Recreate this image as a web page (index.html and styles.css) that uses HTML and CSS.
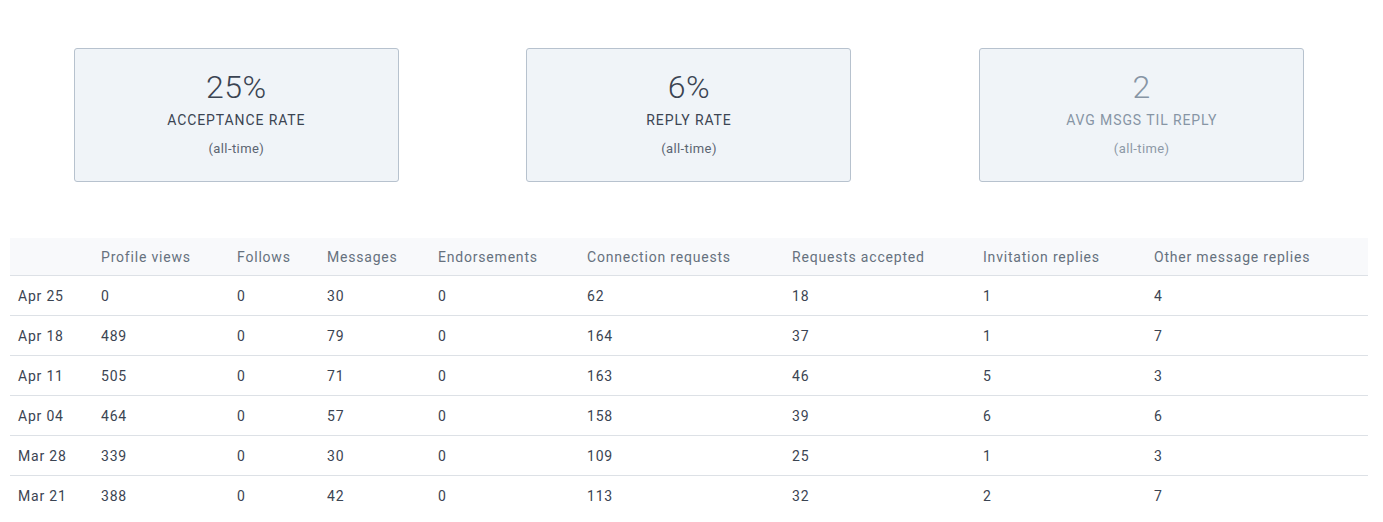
FILE: index.html
```html
<!DOCTYPE html>
<html lang="en">
<head>
  <meta charset="UTF-8" />
  <title>Outreach Stats</title>
  <meta name="viewport" content="width=device-width, initial-scale=1" />
  <link rel="stylesheet" href="styles.css">
</head>
<body>
  <div class="container">
    <div class="stats">
      <div class="stat-col">
        <div class="stat-card">
          <div class="stat-value">25%</div>
          <div class="stat-label">Acceptance rate</div>
          <div class="stat-note">(all-time)</div>
        </div>
      </div>
      <div class="stat-col">
        <div class="stat-card">
          <div class="stat-value">6%</div>
          <div class="stat-label">Reply rate</div>
          <div class="stat-note">(all-time)</div>
        </div>
      </div>
      <div class="stat-col">
        <div class="stat-card muted">
          <div class="stat-value">2</div>
          <div class="stat-label">Avg msgs til reply</div>
          <div class="stat-note">(all-time)</div>
        </div>
      </div>
    </div>

    <table class="weekly">
      <colgroup>
        <col style="width: 83px">
        <col style="width: 136px">
        <col style="width: 90px">
        <col style="width: 111px">
        <col style="width: 149px">
        <col style="width: 205px">
        <col style="width: 191px">
        <col style="width: 171px">
        <col>
      </colgroup>
      <thead>
        <tr>
          <th></th>
          <th>Profile views</th>
          <th>Follows</th>
          <th>Messages</th>
          <th>Endorsements</th>
          <th>Connection requests</th>
          <th>Requests accepted</th>
          <th>Invitation replies</th>
          <th>Other message replies</th>
        </tr>
      </thead>
      <tbody>
        <tr><td>Apr 25</td><td>0</td><td>0</td><td>30</td><td>0</td><td>62</td><td>18</td><td>1</td><td>4</td></tr>
        <tr><td>Apr 18</td><td>489</td><td>0</td><td>79</td><td>0</td><td>164</td><td>37</td><td>1</td><td>7</td></tr>
        <tr><td>Apr 11</td><td>505</td><td>0</td><td>71</td><td>0</td><td>163</td><td>46</td><td>5</td><td>3</td></tr>
        <tr><td>Apr 04</td><td>464</td><td>0</td><td>57</td><td>0</td><td>158</td><td>39</td><td>6</td><td>6</td></tr>
        <tr><td>Mar 28</td><td>339</td><td>0</td><td>30</td><td>0</td><td>109</td><td>25</td><td>1</td><td>3</td></tr>
        <tr><td>Mar 21</td><td>388</td><td>0</td><td>42</td><td>0</td><td>113</td><td>32</td><td>2</td><td>7</td></tr>
      </tbody>
    </table>
  </div>
</body>
</html>
```

FILE: styles.css
```css
body {
  font-family: Roboto, "Liberation Sans", Arial, sans-serif;
  background: #fff;
  color: #3b4452;
  margin: 0;
}
.container {
  padding: 48px 15px 0 10px;
}
.stats {
  display: grid;
  grid-template-columns: 1fr 1fr 1fr;
}
.stat-col {
  display: flex;
  justify-content: center;
}
.stat-card {
  width: 325px;
  height: 134px;
  box-sizing: border-box;
  background: #f0f4f8;
  border: 1px solid #b7c2ce;
  border-radius: 3px;
  display: flex;
  flex-direction: column;
  align-items: center;
  padding-top: 20px;
}
.stat-card.muted {
  color: #8795a5;
}
.stat-value {
  font-size: 32px;
  font-weight: 300;
  line-height: 36px;
  letter-spacing: 0.5px;
}
.stat-label {
  margin-top: 5px;
  font-size: 14px;
  line-height: 20px;
  text-transform: uppercase;
  letter-spacing: 0.9px;
}
.stat-card .stat-note {
  margin-top: 11px;
  font-size: 13px;
  line-height: 16px;
  letter-spacing: 0.4px;
  color: #5b6472;
}
.stat-card.muted .stat-note {
  color: #8d99a7;
}
.weekly {
  width: 100%;
  margin-top: 56px;
  border-collapse: collapse;
  table-layout: fixed;
  font-size: 14px;
  letter-spacing: 0.8px;
}
.weekly th {
  background: #f8f9fb;
  color: #66717e;
  font-weight: 400;
  text-align: left;
  height: 37px;
  padding: 0 8px;
  border-bottom: 1px solid #dde1e6;
}
.weekly td {
  height: 39px;
  padding: 0 8px;
  border-bottom: 1px solid #dde1e6;
  color: #3b4452;
}
.weekly tbody tr:last-child td {
  border-bottom: none;
}
```
